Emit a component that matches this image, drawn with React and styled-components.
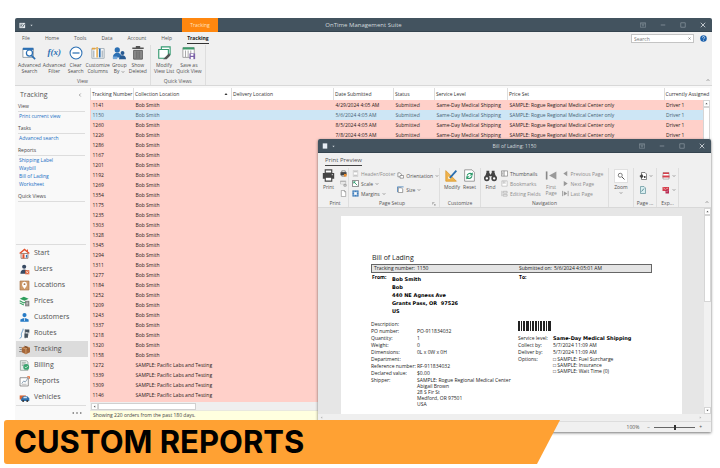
import React from "react";
import styled, { createGlobalStyle } from "styled-components";

const ui = '"Open Sans", "Noto Sans", sans-serif';

const GlobalStyle = createGlobalStyle`
  *, *::before, *::after { box-sizing: border-box; }
  body { margin: 0; background: #fff; font-family: ${ui}; font-size: 5px; line-height: 6px; color: #444; }
  button, input { font: inherit; color: inherit; margin: 0; }
  button { border: 0; background: none; padding: 0; cursor: pointer; }
  h1, h2, h3, p, ul, dl, dd, address { margin: 0; padding: 0; font: inherit; }
  a { text-decoration: none; }
  svg { display: block; flex: none; }
`;

/* ---------- page ---------- */
const Page = styled.div`
  position: relative;
  min-height: 100vh;
  padding-top: 18px;
`;
const MainWindow = styled.main`
  margin: 0 8px 0 15px;
`;
const TitleBar = styled.header`
  display: grid;
  grid-template-columns: 1fr auto 1fr;
  height: 14px;
  background: #43535f;
  color: #d3dade;
  border-radius: 2px 2px 0 0;
  border-bottom: 1px solid #35444f;
`;
const TitleText = styled.h1`
  font-size: ${(p) => (p.$small ? "5px" : "6px")};
  line-height: 14px;
`;
const TitleLeft = styled.div`
  display: flex;
  align-items: center;
  gap: 4px;
  padding-left: 4px;
`;
const ContextTab = styled.span`
  width: 36px;
  height: 14px;
  margin-left: 145px;
  background: #ff870f;
  color: #ffe3c0;
  line-height: 14px;
  text-align: center;
`;
const WindowButtons = styled.div`
  display: flex;
  justify-content: flex-end;
  align-items: center;
  gap: 14px;
  padding-right: 6px;
  color: #8d9aa3;
  button:last-child { color: #d8dee2; }
`;

/* ---------- main ribbon ---------- */
const TabRow = styled.div`
  display: flex;
  align-items: center;
  height: 13px;
  background: #f0f0f0;
  padding: 0 5px 0 7px;
`;
const Tabs = styled.nav`
  display: flex;
  gap: 15px;
  flex: 1;
`;
const Tab = styled.button`
  height: 10px;
  line-height: 9px;
  color: ${(p) => (p.$on ? "#222" : "#555")};
  font-weight: ${(p) => (p.$on ? 700 : 400)};
  border-bottom: 1px solid ${(p) => (p.$on ? "#333" : "transparent")};
`;
const SearchBox = styled.label`
  display: flex;
  align-items: center;
  width: 63px;
  height: 9px;
  padding: 0 2px;
  margin-right: 6px;
  background: #fff;
  border: 1px solid #c4c4c4;
  input {
    flex: 1;
    min-width: 0;
    border: 0;
    padding: 0;
    outline: 0;
    background: none;
    &::placeholder { color: #777; opacity: 1; }
  }
`;
const Ribbon = styled.div`
  display: flex;
  height: ${(p) => p.$height || "41px"};
  background: #f0f0f0;
  border-bottom: 1px solid #d8d8d8;
  padding-left: ${(p) => p.$pad || "0"};
`;
const Group = styled.section`
  display: flex;
  flex-direction: column;
  justify-content: space-between;
  border-right: 1px solid #dedede;
  padding: ${(p) => p.$padding || "1px 3px 0"};
  width: ${(p) => p.$width || "auto"};
`;
const GroupBody = styled.div`
  display: flex;
  justify-content: ${(p) => p.$justify || "flex-start"};
  align-items: flex-start;
  gap: ${(p) => p.$gap || "2px"};
`;
const Caption = styled.h2`
  display: flex;
  justify-content: center;
  align-items: center;
  line-height: 7px;
  color: #555;
  white-space: nowrap;
`;
const CaptionText = styled.span`
  flex: 1;
  text-align: center;
`;
const BigButton = styled.button`
  display: flex;
  flex-direction: column;
  align-items: center;
  gap: ${(p) => p.$gap || "2px"};
  line-height: 6px;
  text-align: center;
  white-space: pre;
  color: ${(p) => (p.$dim ? "#8a8a8a" : "#505050")};
`;
const RibbonEnd = styled.div`
  flex: 1;
  display: flex;
  align-items: flex-end;
  justify-content: flex-end;
  padding: 0 2px 3px 0;
`;

/* ---------- body ---------- */
const Body = styled.div`
  display: flex;
  background: #f9f9f9;
  padding: 2px 2px 0 0;
`;
const Sidebar = styled.aside`
  display: flex;
  flex-direction: column;
  width: 75px;
  flex: none;
  padding: 0 4px 0 1px;
`;
const SideHead = styled.div`
  display: flex;
  justify-content: space-between;
  align-items: center;
  padding: 0 4px 2px;
  font-size: 7px;
  line-height: 13px;
  color: #555;
`;
const SideTitle = styled.h3`
  margin: 0 1px 0 2px;
  padding-bottom: 1px;
  line-height: 7px;
  border-bottom: 1px solid #ddd;
  color: #444;
`;
const SideLinks = styled.div`
  display: flex;
  flex-direction: column;
  padding: 0 3px 5px;
`;
const SideLink = styled.a`
  line-height: 8px;
  color: #1a6fc4;
`;
const ModuleNav = styled.nav`
  margin-top: auto;
  border-top: 1px solid #ddd;
  border-bottom: 1px solid #ddd;
`;
const ModuleLink = styled.a`
  display: grid;
  grid-template-columns: 15px 1fr;
  align-items: center;
  justify-items: start;
  height: 16px;
  margin-right: -2px;
  padding-left: 3px;
  font-size: 7px;
  color: #505050;
  background: ${(p) => (p.$on ? "#dcdcdc" : "none")};
`;
const More = styled.button`
  height: 14px;
  padding-right: 4px;
  display: flex;
  align-items: center;
  justify-content: flex-end;
`;

/* ---------- orders ---------- */
const GridArea = styled.section`
  flex: 1;
  min-width: 0;
`;
const GridScroll = styled.div`
  display: flex;
  background: linear-gradient(#fff 12px, #ffd0c9 12px);
`;
const Orders = styled.table`
  flex: 1;
  width: 100%;
  table-layout: fixed;
  border-collapse: collapse;
  white-space: nowrap;
  th {
    height: 12px;
    padding: 0 0 0 1px;
    text-align: left;
    font-weight: 400;
    border-left: 1px solid #ddd;
    color: #333;
  }
  td { height: 10px; line-height: 10px; padding: 0 0 0 2px; overflow: hidden; }
`;
const OrderRow = styled.tr`
  background: ${(p) => (p.$on ? "#cde6f5" : "#ffd0c9")};
  color: ${(p) => (p.$on ? "#476273" : "#2a1a18")};
`;
const SortHead = styled.span`
  display: flex;
  justify-content: space-between;
  align-items: center;
  padding-right: 3px;
`;
const VScroll = styled.div`
  display: flex;
  flex-direction: column;
  justify-content: space-between;
  width: 7px;
  flex: none;
  margin-top: ${(p) => p.$top || "0"};
  background: #f1f1f1;
`;
const ScrollArrow = styled.button`
  display: grid;
  place-items: center;
  width: 7px;
  height: 7px;
  background: ${(p) => (p.$flat ? "none" : "#fff")};
  border: ${(p) => (p.$flat ? "0" : "1px solid #d5d5d5")};
  color: ${(p) => (p.$flat ? "#b5b5b5" : "#555")};
`;
const VThumb = styled.div`
  height: ${(p) => p.$height};
  margin-bottom: auto;
  background: #fff;
  border: 1px solid #d5d5d5;
`;
const HScroll = styled.div`
  display: flex;
  padding: 1px 0 0 1px;
  background: #efefef;
  border-top: 2px solid #ffd0c9;
`;
const HScrollFlat = styled.div`
  display: flex;
  justify-content: space-between;
  padding-right: 7px;
  background: #efefef;
`;
const HThumb = styled.div`
  width: 98px;
  background: #fff;
  border: 1px solid #d0d0d0;
`;
const StatusLine = styled.p`
  height: 10px;
  line-height: 9px;
  padding-left: 3px;
  border-top: 1px solid #e8e8e0;
  background: #ffffdf;
  color: #444;
`;

/* ---------- preview window ---------- */
const Dialog = styled.section`
  position: absolute;
  left: 318px;
  right: 9px;
  top: 139px;
  background: #f0f0f0;
  border-radius: 2px 2px 0 0;
  box-shadow: 0 1px 3px rgba(0, 0, 0, 0.55);
`;
const DialogTabs = styled.div`
  height: 15px;
  padding: 2px 7px 0;
`;
const DialogTab = styled.button`
  display: block;
  height: 11px;
  font-size: 6px;
  line-height: 9px;
  color: #555;
  border-bottom: 1px solid #444;
`;
const Stack = styled.div`
  display: flex;
  flex-direction: column;
  gap: ${(p) => p.$gap || "1px"};
  padding: ${(p) => p.$padding || "0"};
`;
const SmallButton = styled.button`
  display: flex;
  align-items: center;
  gap: 2px;
  height: 9px;
  line-height: 8px;
  white-space: nowrap;
  color: ${(p) => (p.$dim ? "#8c8c8c" : "#505050")};
`;
const ZoomFrame = styled.span`
  display: grid;
  place-items: center;
  width: 14px;
  height: 14px;
  background: #fff;
  border: 1px solid #e0e0e0;
`;
const Canvas = styled.div`
  display: flex;
  background: #e6e6e6;
`;
const Sheet = styled.article`
  flex: 1;
  min-width: 0;
  margin: 8px 22px 0 23px;
  padding: 37px 31px 7px 30px;
  background: #fff;
  color: #1c1c1c;
`;
const SheetTitle = styled.h2`
  font-size: 7px;
  line-height: 10px;
  padding-left: 1px;
  margin-bottom: 1px;
`;
const TwoCol = styled.div`
  display: grid;
  grid-template-columns: 147px 1fr;
`;
const TrackBar = styled(TwoCol)`
  margin-right: -1px;
  height: 9px;
  line-height: 7px;
  background: #e4e4e4;
  border: 1px solid #666;
`;
const Pair = styled.div`
  display: grid;
  grid-template-columns: ${(p) => p.$label || "46px"} 1fr;
  line-height: ${(p) => p.$line || "7px"};
  padding-left: ${(p) => p.$pad || "0"};
  white-space: nowrap;
`;
const Parties = styled(TwoCol)`
  height: 48px;
  padding-top: 1px;
  font-weight: 700;
  color: #000;
`;
const Address = styled.address`
  font-family: "DejaVu Sans", sans-serif;
  font-weight: 700;
  line-height: 8px;
  padding-top: 1px;
`;
const Detail = styled.dl`
  line-height: 7px;
  white-space: nowrap;
`;
const Lines = styled.dd`
  line-height: 6px;
`;
const Strong = styled.strong`
  font-family: "DejaVu Sans", sans-serif;
  font-weight: 700;
  color: #000;
`;
const DialogStatus = styled.footer`
  display: flex;
  align-items: center;
  justify-content: flex-end;
  gap: 4px;
  height: 11px;
  padding-right: 9px;
  border-top: 1px solid #ddd;
  color: #555;
`;
const ZoomValue = styled.output`
  margin-right: 4px;
`;
const ZoomRange = styled.input`
  appearance: none;
  width: 41px;
  height: 7px;
  background: linear-gradient(#666, #666) center / 100% 1px no-repeat;
  &::-webkit-slider-thumb {
    appearance: none;
    width: 2px;
    height: 5px;
    background: #333;
  }
`;

/* ---------- banner ---------- */
const Banner = styled.footer`
  position: relative;
  width: 556px;
  max-width: 100%;
  height: 44px;
  margin-left: 4px;
  padding-left: 10px;
  background: #ffa133;
  border-radius: 3px 0 0 3px;
  clip-path: polygon(0 0, 100% 0, calc(100% - 23px) 100%, 0 100%);
  color: #000;
  font: 700 31px/44px Inter, sans-serif;
`;

/* ---------- icons ---------- */
const Svg = ({ s = 14, v = 16, children }) => (
  <svg width={s} height={s} viewBox={`0 0 ${v} ${v}`} fill="none" aria-hidden="true">{children}</svg>
);
const B = "#2b6fb3";
const K = "#444";

const glyphs = {
  advSearch: <><path d="M1 3h12v10H1z" fill="#fff" stroke="#8a97a2" /><path d="M1 2h12v2.500H1z" fill={B} /><circle cx="8.500" cy="8" r="3.500" fill="#fff" stroke={B} strokeWidth="1.400" /><path d="m11 11 4 4" stroke={B} strokeWidth="1.800" /></>,
  clear: <><circle cx="8" cy="8" r="6.800" fill="#fff" stroke={B} strokeWidth="1.200" /><path d="M4 8h8" stroke={B} strokeWidth="1.400" /></>,
  columns: <><path d="M1 3h14v11H1z" fill="#fff" stroke="#9aa7b0" /><path d="M1 2h4v2H1z" fill="#e6a33c" /><path d="M3 5v8M13 5v8" stroke="#b5bec5" strokeWidth="2" /><path d="M6 1h2v12H6z" fill="#e9b765" /><path d="M9 3h2v10H9z" fill={B} /></>,
  group: <><circle cx="6" cy="4.500" r="3" fill={B} /><path d="M1 13c0-7 10-7 10 0z" fill={B} /><circle cx="12" cy="8" r="2.200" fill="#275a92" /><path d="M8 15c0-6 8-6 8 0z" fill="#275a92" /><path d="M1 12h5v3H1z" fill="#74a7d8" /></>,
  trash: <><path d="M1.500 2.500h13M5.500 1h5" stroke="#555" strokeWidth="1.800" /><path d="M3 5h10v10H3z" fill="#8e8e8e" stroke="#555" /><path d="M6 6v8M8 6v8M10 6v8" stroke="#666" /></>,
  modifyView: <><path d="M5 1h10v9H5z" fill="#fff" stroke="#379b72" strokeWidth="1.300" /><path d="M2 4h11v8l-4 2H2z" fill="#fff" stroke="#379b72" strokeWidth="1.300" /><path d="M7 15 14 8l1 3-4 4z" fill="#555" /></>,
  saveView: <><path d="M1 2h13v11H1z" fill="#fff" stroke="#999" /><path d="M1 1.500h13V4H1z" fill="#3d9a6b" /><path d="M4 5v8M7 5v8M10 5v8" stroke="#aaa" strokeWidth="1.200" /><path d="M8.500 8.500H15V15H8.500z" fill="#7c62a8" /><path d="M10 9h3v2h-3zM10 12.500h3V15h-3z" fill="#fff" /></>,
  start: <><path d="M3 8h10v7H3z" fill="#fff" stroke="#7b5140" /><path d="m1 8 7-6 7 6" stroke="#e2502b" strokeWidth="2" /><path d="M5 9h3v6H5z" fill="#e2502b" /><path d="M10 10h2v4h-2z" fill={B} /><path d="M11.500 2H13v3h-1.500z" fill="#e2502b" /></>,
  users: <><circle cx="7.500" cy="4" r="3" fill="#374a63" /><path d="M2 14c0-8 11-8 11 0z" fill="#374a63" /><path d="M9 9h6v6H9z" fill="#e0643c" /><path d="m10.500 10.500 3 3m0-3-3 3" stroke="#fff" /></>,
  locations: <><path d="M1.500 1.500h13v13h-13z" fill="#cf9b6b" stroke="#a87347" /><path d="M8 13C5 9 4.500 8 4.500 6a3.500 3.500 0 0 1 7 0c0 2-.5 3-3.500 7z" fill="#fff" /><circle cx="8" cy="6" r="1.400" fill="#a87347" /></>,
  prices: <><path d="m1 4 6-3 7 3-6 3z" fill="#2f9e5d" /><path d="m1 7 6 3 5-2M1 10l6 3" stroke="#2f9e5d" strokeWidth="1.500" /><path d="M9 7h6v8H9z" fill="#777" /><path d="M10.500 9h3M10.500 11h3M10.500 13h3" stroke="#fff" strokeWidth=".8" /></>,
  customers: <><circle cx="8" cy="4.500" r="3" fill="#267bc6" /><path d="M2 14v-3l4-2h4l4 2v3z" fill="#267bc6" /><path d="M8 9v4" stroke="#fff" /></>,
  routes: <><path d="M1 15c5-2 1-5 3-8 1-3 2-3 2-6" stroke="#4785bd" strokeWidth="1.200" /><path d="M9 2h6v4H9zM8 8h5v6H8z" fill="#45525e" /><path d="M9 2v13M12 7h3M12 10h2" stroke="#45525e" /></>,
  tracking: <><path d="m4 5 6-2 6 2v7l-6 3-6-3z" fill="#a5683b" /><path d="m4 5 6 2 6-2M10 7v8" stroke="#e0ac7b" /><path d="M0 5h4M1 8h3M0 11h4" stroke="#666" /><path d="m8 3 5 3v2" stroke="#5d3a20" /></>,
  billing: <><path d="M2 1h9l2 2v12H2z" fill="#e6eeea" stroke="#88948e" /><path d="M4 4h6M4 6h5M4 8h3" stroke="#88948e" /><circle cx="10.500" cy="10" r="4.300" fill="#3aa56f" /><path d="m8.500 10 1.500 1.500 3-3" stroke="#fff" /></>,
  reports: <><path d="M1.500 2.500h12v12h-12z" fill="#fff" stroke="#666" /><path d="m4 11 3-4 2 2 4-6" stroke="#5e7d96" /><path d="M12 1h3v3" stroke="#e2642b" strokeWidth="1.500" /><path d="M4 12h7" stroke="#999" /></>,
  vehicles: <><path d="M1 5h9v6H1z" fill="#d66736" /><path d="m4 9 2-3h6l3 3v4H3v-3z" fill="#2f70ad" /><path d="M7 7h4l1 2H6z" fill="#cfe3f4" /><circle cx="6" cy="13" r="1.500" fill="#333" /><circle cx="12" cy="13" r="1.500" fill="#333" /></>,
  printer: <><path d="M4 1h8v4H4zM4 10h8v5H4z" fill="#fff" stroke={K} strokeWidth="1.400" /><path d="M1 5h14v7h-3v-2H4v2H1z" fill={K} /><path d="M12 7h1.500" stroke="#fff" /></>,
  quickPrint: <><path d="M4 2h8v4H4zM4 10h8v4H4z" fill="#fff" stroke={K} strokeWidth="1.400" /><path d="M1 5h14v7H1z" fill={K} /><path d="M9 9h6v6H9z" fill="#e98b2d" /></>,
  parameters: <><path d="M1 2h12v7H1z" stroke="#999" fill="#fff" /><path d="M1 4h12M9 10h5v4H9z" stroke="#999" strokeWidth="2" /></>,
  blank: <path d="M3 1h7l3 3v11H3zM10 1v3h3" fill="#fff" stroke="#888" strokeWidth="1.400" />,
  header: <><path d="M3 1h10v14H3z" fill="#fff" stroke="#aaa" /><path d="M4 4h8M4 12h8" stroke="#aaa" strokeWidth="2" /></>,
  scale: <><path d="M1 1h14v14H1z" fill="#fff" stroke="#555" strokeWidth="1.500" /><path d="m4 4 8 8M4 8V4h4" stroke="#2d9a6b" strokeWidth="2" /></>,
  margins: <><path d="M1 1h14v14H1z" fill={B} /><path d="M5 1v14M11 1v14M1 5h14M1 11h14" stroke="#d5e6f6" /><path d="M5 5h6v6H5z" fill="#fff" /></>,
  orientation: <><path d="M2 2h5l3 3v6H2z" fill="#fff" stroke="#666" strokeWidth="1.400" /><path d="M7 8h8v6H7z" fill="#fff" stroke="#666" strokeWidth="1.400" /></>,
  size: <><path d="M3 4h7l3 3v8H3z" fill="#fff" stroke="#666" strokeWidth="1.400" /><path d="M1 2h14M1 2v12" stroke={B} strokeWidth="1.600" /></>,
  modify: <><path d="M1 2v13h13z" fill="#efb34e" stroke="#dc9a2d" /><path d="M4 9v3h3z" fill="#fff" /><path d="m6 11 8-9" stroke="#2a6eaf" strokeWidth="2.200" /></>,
  reset: <><path d="M2 1h9l3 3v11H2z" fill="#fff" stroke="#888" /><path d="M11 6a4 4 0 0 0-6 2M5 11a4 4 0 0 0 6-2" stroke="#2d9a6b" strokeWidth="1.500" /><path d="M12 4v4H8zM4 13V9h4z" fill="#2d9a6b" /></>,
  find: <><path d="M3 2h3.500v4H3zM9.500 2H13v4H9.500z" fill={K} /><path d="M3 5h3.500L8 7l1.500-2H13l3 7H10V9H6v3H0z" fill={K} /><circle cx="3.500" cy="11.500" r="2.500" fill="#fff" stroke={K} strokeWidth="2" /><circle cx="12.500" cy="11.500" r="2.500" fill="#fff" stroke={K} strokeWidth="2" /></>,
  thumbs: <><path d="M1 2h14v12H1z" fill="#fff" stroke="#666" strokeWidth="1.300" /><path d="M7 2v12M3 5h2M3 8h2M3 11h2" stroke="#666" strokeWidth="1.500" /></>,
  bookmark: <><path d="M2 2h12v12H2z" fill="#fff" stroke="#aaa" strokeWidth="1.300" /><path d="M5 2v6l2-2 2 2V2" stroke="#aaa" strokeWidth="1.500" /></>,
  fields: <path d="M2 2v12M5 3h9v4H5zM5 10h9v4H5z" stroke="#aaa" strokeWidth="1.500" />,
  first: <><path d="M2 3v10" stroke="#888" strokeWidth="2" /><path d="M14 3v10L5 8z" fill="#999" /></>,
  prev: <path d="M12 2v12L3 8z" fill="#999" />,
  next: <path d="M4 2v12l9-6z" fill="#999" />,
  last: <><path d="M1 2v12M14 2v12" stroke="#999" strokeWidth="2" /><path d="M4 3v10l8-5z" fill="#999" /></>,
  zoom: <><circle cx="6.500" cy="6.500" r="4" stroke="#555" strokeWidth="1.500" /><path d="m10 10 5 5" stroke="#555" strokeWidth="2" /></>,
  pageColor: <><path d="M5 1h7l3 3v11H5z" fill="#fff" stroke="#555" strokeWidth="1.400" /><path d="m1 8 5-4 3 5-4 4z" fill={K} /><path d="M10 8h3v4h-3z" fill={K} /></>,
  watermark: <><path d="M3 1h7l3 3v11H3z" fill="#d9eef0" stroke="#5e8f98" strokeWidth="1.400" /><path d="m5 11 5-6" stroke="#5e8f98" strokeWidth="2" /></>,
  exportPdf: <><path d="M2 1h12v13H2z" fill="#fff" stroke="#999" strokeWidth="1.400" /><path d="M2 1h12v3H2zM1 7h14v4H1z" fill="#d6404c" /></>,
  sendPdf: <><path d="M1 2h13v8H1z" fill="#d6404c" /><path d="m3 4 4 3 5-3" stroke="#fff" /><path d="M7 7h7v8H7z" fill="#b82e55" /><path d="m9 12 3-3" stroke="#fff" /></>,
  app: <><path d="M1 2h13v12H1z" fill="#e9edf0" /><path d="M3 5h6M3 8h4M3 11h3" stroke="#43535f" strokeWidth="1.600" /><path d="m8 12 5-8" stroke="#43535f" strokeWidth="2" /></>,
  doc: <path d="M2 1h12v14H2z" fill="#e7eef6" />,
  pin: <path d="M1 2h14v12H1zM1 5h14M8 12V7M5 9l3-2 3 2" stroke="currentColor" strokeWidth="1.500" />,
  min: <path d="M2 8h12" stroke="currentColor" strokeWidth="2" />,
  max: <path d="M2 2h12v12H2z" stroke="currentColor" strokeWidth="1.800" />,
  close: <path d="m2 2 12 12M14 2 2 14" stroke="currentColor" strokeWidth="2.200" />,
  down: <path d="m3 5 5 5 5-5" stroke="currentColor" strokeWidth="2.200" />,
  up: <path d="m3 11 5-5 5 5" stroke="currentColor" strokeWidth="2.200" />,
  left: <path d="m11 2-6 6 6 6" stroke="currentColor" strokeWidth="2" />,
  triUp: <path d="M2 12h12L8 4z" fill="currentColor" />,
  triDown: <path d="M2 4h12l-6 8z" fill="currentColor" />,
  triLeft: <path d="M12 2v12L4 8z" fill="currentColor" />,
  triRight: <path d="M4 2v12l8-6z" fill="currentColor" />,
  help: <><circle cx="8" cy="8" r="7.500" fill="#1d62ad" /><path d="M5.500 6c0-3.500 5-3.500 5 0 0 2-2.500 1.800-2.500 4M8 11.500v1.500" stroke="#fff" strokeWidth="1.600" /></>,
  dots: <><circle cx="2" cy="8" r="1.300" fill="#555" /><circle cx="8" cy="8" r="1.300" fill="#555" /><circle cx="14" cy="8" r="1.300" fill="#555" /></>,
  launcher: <path d="M2 10V2h8M6 6l7 7M13 8v5H8" stroke="#777" strokeWidth="1.800" />,
};
const Icon = ({ n, s }) => <Svg s={s}>{glyphs[n]}</Svg>;

const Fx = styled.span`
  height: 14px;
  font: italic 700 9px/13px "Liberation Serif", serif;
  color: #2b6fb3;
`;
const IconBox = styled.span`
  display: inline-block;
  vertical-align: middle;
`;

/* ---------- data ---------- */
const modules = ["Start", "Users", "Locations", "Prices", "Customers", "Routes", "Tracking", "Billing", "Reports", "Vehicles"];
const numbers = "1141 1150 1260 1226 1286 1167 1201 1192 1269 1354 1175 1235 1303 1328 1345 1294 1311 1277 1184 1252 1209 1243 1337 1218 1320 1158 1272 1339 1309 1146".split(" ");
const dates = ["4/29/2024 4:05 AM", "5/6/2024 4:05 AM", "8/5/2024 4:05 AM", "7/8/2024 4:05 AM"];
const detailed = dates.length;
const orders = numbers.map((id, i) => ({
  id,
  from: i < 26 ? "Bob Smith" : "SAMPLE: Pacific Labs and Testing",
  date: dates[i],
  status: i < detailed ? "Submitted" : "",
  service: i < detailed ? "Same-Day Medical Shipping" : "",
  price: i < detailed ? "SAMPLE: Rogue Regional Medical Center only" : "",
  driver: i < detailed ? "Driver 1" : "",
}));
const bars = [2, 1, 1, 1, 2, 1, 3, 1, 1, 1, 2, 1, 2, 1, 1, 1, 2, 1, 2, 1, 1, 1, 3];

const WindowControls = () => (
  <WindowButtons>
    <button aria-label="Ribbon options"><Icon n="pin" s={6} /></button>
    <button aria-label="Minimize"><Icon n="min" s={6} /></button>
    <button aria-label="Maximize"><Icon n="max" s={6} /></button>
    <button aria-label="Close"><Icon n="close" s={6} /></button>
  </WindowButtons>
);
const Big = ({ icon, size = 14, children, ...rest }) => (
  <BigButton {...rest}>{icon === "fx" ? <Fx>f(x)</Fx> : <Icon n={icon} s={size} />}<span>{children}</span></BigButton>
);
const Small = ({ icon, menu, children, ...rest }) => (
  <SmallButton {...rest}><Icon n={icon} s={7} />{children}{menu && <Icon n="down" s={4} />}</SmallButton>
);

function Barcode() {
  let x = 0;
  return (
    <svg width="33" height="10" role="img" aria-label="Barcode 1150" shapeRendering="crispEdges">
      {bars.map((w, i) => {
        const r = i % 2 === 0 ? <rect key={i} x={x} width={w} height="10" fill="#222" /> : null;
        x += w;
        return r;
      })}
    </svg>
  );
}

function SidePanel() {
  return (
    <Sidebar>
      <SideHead><h2>Tracking</h2><button aria-label="Collapse panel"><Icon n="left" s={4} /></button></SideHead>
      <SideTitle>View</SideTitle>
      <SideLinks><SideLink href="#print">Print current view</SideLink></SideLinks>
      <SideTitle>Tasks</SideTitle>
      <SideLinks><SideLink href="#search">Advanced search</SideLink></SideLinks>
      <SideTitle>Reports</SideTitle>
      <SideLinks>
        {["Shipping Label", "Waybill", "Bill of Lading", "Worksheet"].map((t) => <SideLink key={t} href="#report">{t}</SideLink>)}
      </SideLinks>
      <SideTitle>Quick Views</SideTitle>
      <ModuleNav>
        {modules.map((m) => (
          <ModuleLink key={m} href={`#${m}`} $on={m === "Tracking"}><Icon n={m.toLowerCase()} s={11} />{m}</ModuleLink>
        ))}
      </ModuleNav>
      <More aria-label="More modules"><Icon n="dots" s={10} /></More>
    </Sidebar>
  );
}

function OrderGrid() {
  return (
    <GridArea>
      <GridScroll>
        <Orders>
          <colgroup>
            <col width="43" /><col width="98" /><col width="102" /><col width="60" /><col width="41" /><col width="73" /><col /><col width="39" />
          </colgroup>
          <thead>
            <tr>
              <th>Tracking Number</th>
              <th><SortHead>Collection Location<Icon n="triUp" s={4} /></SortHead></th>
              <th>Delivery Location</th><th>Date Submitted</th><th>Status</th><th>Service Level</th><th>Price Set</th><th>Currently Assigned</th>
            </tr>
          </thead>
          <tbody>
            {orders.map((o) => (
              <OrderRow key={o.id} $on={o.id === "1150"}>
                <td>{o.id}</td><td>{o.from}</td><td /><td>{o.date}</td><td>{o.status}</td>
                <td>{o.service}</td><td>{o.price}</td><td>{o.driver}</td>
              </OrderRow>
            ))}
          </tbody>
        </Orders>
        <VScroll $top="12px">
          <ScrollArrow aria-label="Scroll up"><Icon n="triUp" s={3} /></ScrollArrow>
          <VThumb $height="90px" />
        </VScroll>
      </GridScroll>
      <HScroll>
        <ScrollArrow aria-label="Scroll left"><Icon n="triLeft" s={3} /></ScrollArrow>
        <HThumb />
      </HScroll>
      <StatusLine>Showing 220 orders from the past 180 days.</StatusLine>
    </GridArea>
  );
}

function PreviewWindow() {
  return (
    <Dialog role="dialog" aria-label="Bill of Lading: 1150">
      <TitleBar>
        <TitleLeft><Icon n="doc" s={6} /><Icon n="triDown" s={3} /></TitleLeft>
        <TitleText $small>Bill of Lading: 1150</TitleText>
        <WindowControls />
      </TitleBar>
      <DialogTabs><DialogTab>Print Preview</DialogTab></DialogTabs>
      <Ribbon $height="40px" $pad="4px">
        <Group $width="27px" $padding="1px 0 0">
          <GroupBody $gap="5px">
            <Big icon="printer" size={13}>Print</Big>
            <Stack>
              <SmallButton aria-label="Quick print"><Icon n="quickPrint" s={7} /></SmallButton>
              <SmallButton aria-label="Parameters"><Icon n="parameters" s={7} /></SmallButton>
              <SmallButton aria-label="Blank page"><Icon n="blank" s={7} /></SmallButton>
            </Stack>
          </GroupBody>
          <Caption>Print</Caption>
        </Group>
        <Group $width="91px">
          <GroupBody>
            <Stack>
              <Small icon="header" $dim>Header/Footer</Small>
              <Small icon="scale" menu>Scale</Small>
              <Small icon="margins" menu>Margins</Small>
            </Stack>
            <Stack $gap="5px" $padding="2px 0 0">
              <Small icon="orientation" menu>Orientation</Small>
              <Small icon="size" menu>Size</Small>
            </Stack>
          </GroupBody>
          <Caption><CaptionText>Page Setup</CaptionText><button aria-label="Page setup options"><Icon n="launcher" s={4} /></button></Caption>
        </Group>
        <Group $width="41px" $padding="1px 1px 0">
          <GroupBody $justify="space-evenly" $gap="0">
            <Big icon="modify" size={13}>Modify</Big>
            <Big icon="reset" size={13}>Reset</Big>
          </GroupBody>
          <Caption>Customize</Caption>
        </Group>
        <Group $width="128px">
          <GroupBody $gap="4px">
            <Big icon="find" size={13}>Find</Big>
            <Stack>
              <Small icon="thumbs">Thumbnails</Small>
              <Small icon="bookmark" $dim>Bookmarks</Small>
              <Small icon="fields" $dim>Editing Fields</Small>
            </Stack>
            <Big icon="first" size={13} $dim>{"First\nPage"}</Big>
            <Stack>
              <Small icon="prev" $dim>Previous Page</Small>
              <Small icon="next" $dim>Next Page</Small>
              <Small icon="last" $dim>Last Page</Small>
            </Stack>
          </GroupBody>
          <Caption>Navigation</Caption>
        </Group>
        <Group $width="25px">
          <GroupBody $justify="center">
            <BigButton $gap="1px"><ZoomFrame><Icon n="zoom" s={8} /></ZoomFrame>Zoom<Icon n="down" s={4} /></BigButton>
          </GroupBody>
        </Group>
        <Group $width="23px">
          <Stack $gap="5px" $padding="2px 2px 0">
            <SmallButton aria-label="Page color"><Icon n="pageColor" s={8} /><Icon n="down" s={4} /></SmallButton>
            <SmallButton aria-label="Watermark"><Icon n="watermark" s={8} /></SmallButton>
          </Stack>
          <Caption>Page ...</Caption>
        </Group>
        <Group $width="22px">
          <Stack $gap="5px" $padding="2px 2px 0">
            <SmallButton aria-label="Export"><Icon n="exportPdf" s={8} /><Icon n="down" s={4} /></SmallButton>
            <SmallButton aria-label="Send"><Icon n="sendPdf" s={8} /><Icon n="down" s={4} /></SmallButton>
          </Stack>
          <Caption>Exp...</Caption>
        </Group>
        <RibbonEnd><button aria-label="Collapse ribbon"><Icon n="up" s={4} /></button></RibbonEnd>
      </Ribbon>
      <Canvas>
        <Sheet>
          <SheetTitle>Bill of Lading</SheetTitle>
          <TrackBar>
            <Pair $label="43px" $pad="2px"><span>Tracking number:</span><span>1150</span></Pair>
            <Pair $label="35px"><span>Submitted on:</span><span>5/6/2024 4:05:01 AM</span></Pair>
          </TrackBar>
          <Parties>
            <Pair $label="20px" $pad="1px">
              <span>From:</span>
              <Address>Bob Smith<br />Bob<br />440 NE Agness Ave<br />Grants Pass, OR&nbsp; 97526<br />US</Address>
            </Pair>
            <Pair $pad="1px">To:</Pair>
          </Parties>
          <TwoCol>
            <Detail>
              {[["Description:", ""], ["PO number:", "PO-911834032"], ["Quantity:", "1"], ["Weight:", "0"], ["Dimensions:", "0L x 0W x 0H"], ["Department:", ""], ["Reference number:", "RF-911834032"], ["Declared value:", "$0.00"]].map(([k, v]) => (
                <Pair key={k}><dt>{k}</dt><dd>{v}</dd></Pair>
              ))}
              <Pair><dt>Shipper:</dt><Lines>SAMPLE: Rogue Regional Medical Center<br />Abigail Brown<br />28 S Fir St<br />Medford, OR 97501<br />USA</Lines></Pair>
            </Detail>
            <div>
              <Barcode />
              <Stack $padding="4px 0 0" $gap="0">
                <Pair $label="35px"><span>Service level:</span><Strong>Same-Day Medical Shipping</Strong></Pair>
                <Pair $label="35px"><span>Collect by:</span><span>5/7/2024 11:09 AM</span></Pair>
                <Pair $label="35px"><span>Deliver by:</span><span>5/7/2024 11:09 AM</span></Pair>
                <Pair $label="35px" $line="6px"><span>Options:</span><span>□ SAMPLE: Fuel Surcharge<br />□ SAMPLE: Insurance<br />□ SAMPLE: Wait Time (0)</span></Pair>
              </Stack>
            </div>
          </TwoCol>
        </Sheet>
        <VScroll>
          <ScrollArrow aria-label="Scroll up"><Icon n="triUp" s={3} /></ScrollArrow>
          <VThumb $height="87px" />
          <ScrollArrow aria-label="Scroll down"><Icon n="triDown" s={3} /></ScrollArrow>
        </VScroll>
      </Canvas>
      <HScrollFlat>
        <ScrollArrow $flat aria-label="Scroll left"><Icon n="triLeft" s={3} /></ScrollArrow>
        <ScrollArrow $flat aria-label="Scroll right"><Icon n="triRight" s={3} /></ScrollArrow>
      </HScrollFlat>
      <DialogStatus>
        <ZoomValue>100%</ZoomValue>
        <span>−</span>
        <ZoomRange type="range" aria-label="Zoom" min="0" max="100" defaultValue="50" />
        <span>+</span>
      </DialogStatus>
    </Dialog>
  );
}

export default function App() {
  return (
    <Page>
      <GlobalStyle />
      <MainWindow>
        <TitleBar>
          <TitleLeft><Icon n="app" s={7} /><Icon n="triDown" s={3} /><ContextTab>Tracking</ContextTab></TitleLeft>
          <TitleText>OnTime Management Suite</TitleText>
          <WindowControls />
        </TitleBar>
        <TabRow>
          <Tabs>
            {["File", "Home", "Tools", "Data", "Account", "Help", "Tracking"].map((t) => <Tab key={t} $on={t === "Tracking"}>{t}</Tab>)}
          </Tabs>
          <SearchBox><input placeholder="Search" aria-label="Search" /><Icon n="close" s={3} /></SearchBox>
          <button aria-label="Help"><Icon n="help" s={7} /></button>
        </TabRow>
        <Ribbon>
          <Group>
            <GroupBody>
              <Big icon="advSearch">{"Advanced\nSearch"}</Big>
              <Big icon="fx">{"Advanced\nFilter"}</Big>
              <Big icon="clear">{"Clear\nSearch"}</Big>
              <Big icon="columns">{"Customize\nColumns"}</Big>
              <Big icon="group">{"Group\nBy "}<IconBox><Icon n="down" s={4} /></IconBox></Big>
              <Big icon="trash">{"Show\nDeleted"}</Big>
            </GroupBody>
            <Caption>View</Caption>
          </Group>
          <Group>
            <GroupBody>
              <Big icon="modifyView">{"Modify\nView List"}</Big>
              <Big icon="saveView">{"Save as\nQuick View"}</Big>
            </GroupBody>
            <Caption>Quick Views</Caption>
          </Group>
          <RibbonEnd><button aria-label="Collapse ribbon"><Icon n="up" s={4} /></button></RibbonEnd>
        </Ribbon>
        <Body>
          <SidePanel />
          <OrderGrid />
        </Body>
      </MainWindow>
      <PreviewWindow />
      <Banner><h2>CUSTOM REPORTS</h2></Banner>
    </Page>
  );
}
